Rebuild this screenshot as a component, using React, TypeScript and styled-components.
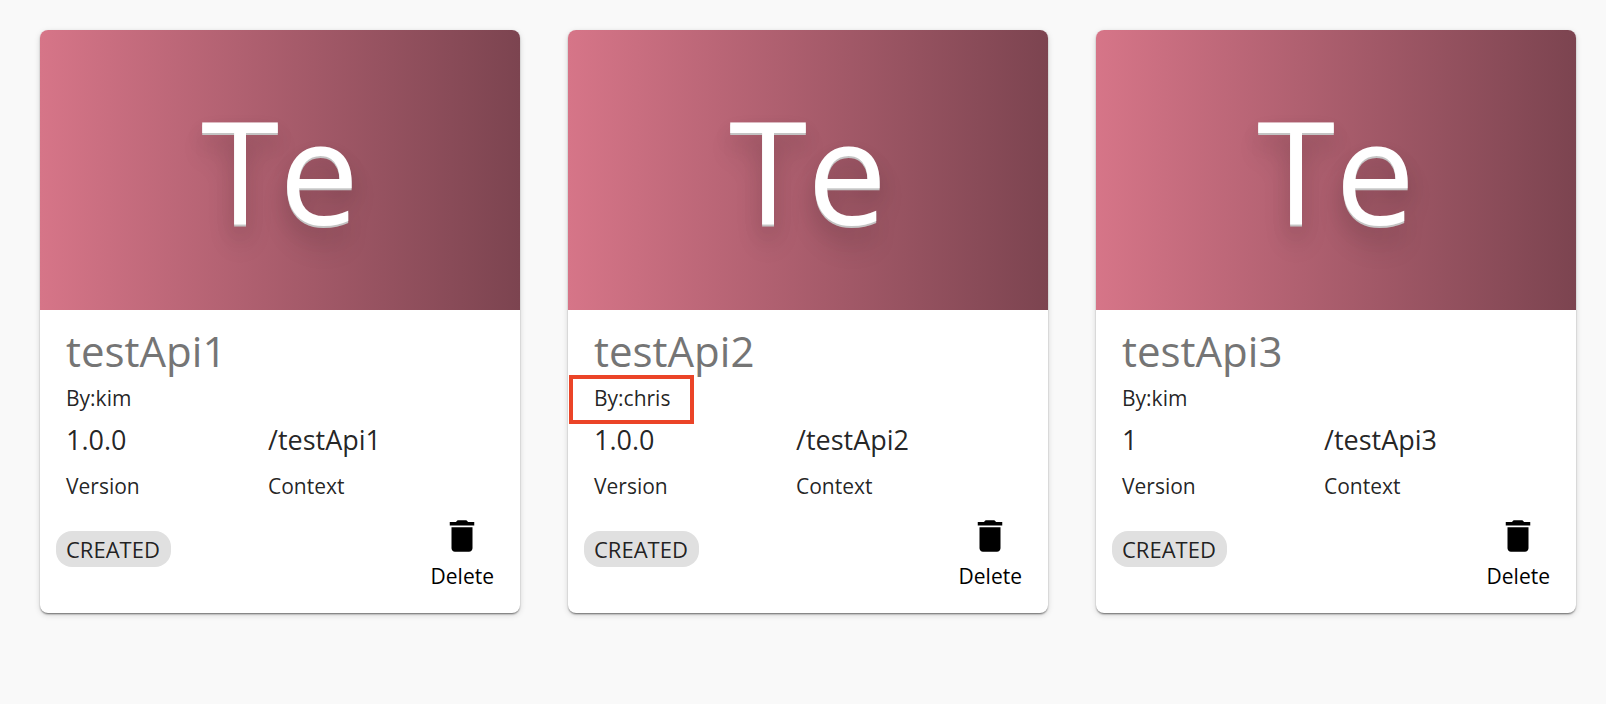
import React from "react";
import styled, { createGlobalStyle } from "styled-components";

const GlobalStyle = createGlobalStyle`
  *, *::before, *::after { box-sizing: border-box; }
  body {
    margin: 0;
    background: #f9f9f9;
    color: rgba(0, 0, 0, 0.87);
    font-family: "Open Sans", "Noto Sans", sans-serif;
  }
`;

const Listing = styled.main`
  display: grid;
  grid-template-columns: repeat(auto-fit, minmax(400px, 1fr));
  gap: 48px;
  padding: 30px 30px 30px 40px;
`;

const Card = styled.article`
  border-radius: 8px;
  background: #fff;
  box-shadow: 0 2px 2px -1px rgba(0, 0, 0, 0.4), 0 1px 2px rgba(0, 0, 0, 0.2),
    0 2px 6px rgba(0, 0, 0, 0.14);
`;

const Thumbnail = styled.div`
  display: flex;
  align-items: center;
  justify-content: center;
  height: 280px;
  border-radius: 8px 8px 0 0;
  background: linear-gradient(to right, #d67588, #7c4450);
  color: #fff;
  font-size: 142px;
  line-height: 190px;
  text-shadow: 0 2px 0 #c4c4c4, 0 10px 20px rgba(0, 0, 0, 0.1),
    0 20px 28px rgba(0, 0, 0, 0.12);
`;

const Details = styled.div`
  padding: 14px 26px 0;
`;

const Title = styled.h2`
  margin: 0;
  color: #757575;
  font-size: 42px;
  font-weight: 400;
  line-height: 54px;
`;

const Provider = styled.div`
  position: relative;
  font-size: 21px;
  line-height: 40px;
`;

const Highlight = styled.span`
  position: absolute;
  top: -3px;
  left: -25px;
  width: 125px;
  height: 49px;
  border: 4px solid #eb4427;
`;

const Facts = styled.dl`
  display: grid;
  grid-template-columns: 202px 1fr;
  margin: 0;
`;

const Fact = styled.div`
  display: flex;
  flex-direction: column-reverse;
`;

const FactName = styled.dt`
  font-size: 21px;
  line-height: 48px;
`;

const FactValue = styled.dd`
  margin: 0;
  font-size: 27px;
  line-height: 44px;
`;

const Footer = styled.footer`
  display: flex;
  align-items: flex-start;
  justify-content: space-between;
  padding: 5px 26px 18px 16px;
`;

const Status = styled.span`
  margin-top: 16px;
  padding: 0 11px 0 10px;
  border-radius: 16px;
  background: #e0e0e0;
  font-size: 22px;
  line-height: 36px;
`;

const DeleteButton = styled.button`
  display: flex;
  flex-direction: column;
  align-items: center;
  padding: 0;
  border: 0;
  background: none;
  color: #000;
  font-family: inherit;
  font-size: 21px;
  line-height: 38px;
  cursor: pointer;
`;

const TrashIcon = () => (
  <svg width="42" height="42" viewBox="0 0 24 24" fill="currentColor" aria-hidden="true">
    <path d="M6 19c0 1.1.9 2 2 2h8c1.1 0 2-.9 2-2V7H6v12zM19 4h-3.5l-1-1h-5l-1 1H5v2h14V4z" />
  </svg>
);

interface Api {
  name: string;
  provider: string;
  version: string;
  status: string;
  highlighted?: boolean;
}

const apis: Api[] = [
  { name: "testApi1", provider: "kim", version: "1.0.0", status: "CREATED" },
  { name: "testApi2", provider: "chris", version: "1.0.0", status: "CREATED", highlighted: true },
  { name: "testApi3", provider: "kim", version: "1", status: "CREATED" },
];

const ApiCard = ({ api }: { api: Api }) => (
  <Card>
    <Thumbnail>Te</Thumbnail>
    <Details>
      <Title>{api.name}</Title>
      <Provider>
        {`By:${api.provider}`}
        {api.highlighted && <Highlight />}
      </Provider>
      <Facts>
        <Fact>
          <FactName>Version</FactName>
          <FactValue>{api.version}</FactValue>
        </Fact>
        <Fact>
          <FactName>Context</FactName>
          <FactValue>{`/${api.name}`}</FactValue>
        </Fact>
      </Facts>
    </Details>
    <Footer>
      <Status>{api.status}</Status>
      <DeleteButton type="button">
        <TrashIcon />
        Delete
      </DeleteButton>
    </Footer>
  </Card>
);

export default function App() {
  return (
    <>
      <GlobalStyle />
      <Listing>
        {apis.map((api) => (
          <ApiCard key={api.name} api={api} />
        ))}
      </Listing>
    </>
  );
}
